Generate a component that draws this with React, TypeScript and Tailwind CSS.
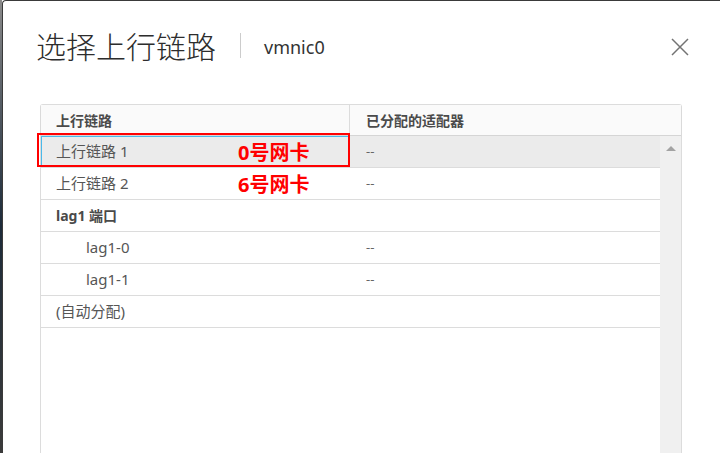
import React from "react";

const rows = [
  { name: "上行链路 1", adapter: "--", selected: true, note: "0号网卡" },
  { name: "上行链路 2", adapter: "--", note: "6号网卡" },
  { name: "lag1 端口", adapter: "", bold: true },
  { name: "lag1-0", adapter: "--", indent: true },
  { name: "lag1-1", adapter: "--", indent: true },
  { name: "(自动分配)", adapter: "" },
];

const App = () => {
  return (
    <div className="flex h-[453px] w-[720px] overflow-hidden font-['Noto_Sans','Noto_Sans_CJK_SC',sans-serif]">
      {/* backdrop strip */}
      <div className="w-[2px] bg-gradient-to-b from-[#8a8a8a] via-[#1d2b3a] to-[#3b3b3b]" />

      <div className="flex-1 flex flex-col bg-white border-l border-t border-[#3a3a3a] rounded-tl-[4px]">
        {/* title */}
        <div className="flex items-center pt-[28px] pl-[33px] pr-[30px]">
          <span className="text-[30px] leading-[36px] font-light text-[#2d2d2d]">
            选择上行链路
          </span>
          <div className="w-px h-[25px] bg-[#cccccc] ml-[24px] mr-[23px] -mt-[3px]" />
          <span className="text-[18px] leading-[36px] text-[#333]">vmnic0</span>
          <button className="ml-auto text-[#737373]">
            <svg width="20" height="20" viewBox="0 0 20 20">
              <path
                d="M2 2 L18 18 M18 2 L2 18"
                stroke="currentColor"
                strokeWidth="1.5"
                fill="none"
              />
            </svg>
          </button>
        </div>

        {/* table */}
        <div className="relative mt-[39px] ml-[37px] mr-[38px] flex-1 flex flex-col border-l border-r border-t border-[#dcdcdc] rounded-t-[3px]">
          <div className="flex h-[31px] bg-[#fafafa] border-b border-[#d5d5d5] shadow-[0_1px_1px_rgba(0,0,0,0.06)] text-[14px] font-bold text-[#4a4a4a]">
            <div className="w-[309px] flex items-center pl-[15px] border-r border-[#dcdcdc]">
              上行链路
            </div>
            <div className="flex-1 flex items-center pl-[16px]">已分配的适配器</div>
          </div>

          <div className="flex flex-1">
            <div className="flex-1 flex flex-col">
              {rows.map((row) => (
                <div
                  key={row.name}
                  className={`flex h-[32px] border-b border-[#dcdcdc] text-[15px] text-[#565656] ${
                    row.selected ? "bg-[#ebebeb]" : "bg-white"
                  }`}
                >
                  <div
                    className={`relative w-[309px] flex items-center ${
                      row.indent ? "pl-[45px]" : "pl-[15px]"
                    } ${row.bold ? "font-bold text-[14px] text-[#4a4a4a]" : ""} ${
                      row.selected ? "outline outline-1 -outline-offset-1 outline-[#49b9ea]" : ""
                    }`}
                  >
                    {row.name}
                    {row.note && (
                      <span className="absolute left-[197px] top-[2px] text-[20px] font-bold text-[#ff0000]">
                        {row.note}
                      </span>
                    )}
                  </div>
                  <div className="flex-1 flex items-center pl-[16px] text-[13px] text-[#666]">
                    {row.adapter}
                  </div>
                </div>
              ))}
            </div>

            {/* scrollbar */}
            <div className="w-[21px] bg-[#f0f0f0] flex justify-center pt-[10px]">
              <div className="w-0 h-0 border-l-[5px] border-r-[5px] border-b-[5px] border-l-transparent border-r-transparent border-b-[#a3a3a3]" />
            </div>
          </div>

          {/* annotation box */}
          <div className="absolute left-[-4px] top-[28px] w-[313px] h-[34px] border-2 border-[#ff0000]" />
        </div>
      </div>
    </div>
  );
};

export default App;
